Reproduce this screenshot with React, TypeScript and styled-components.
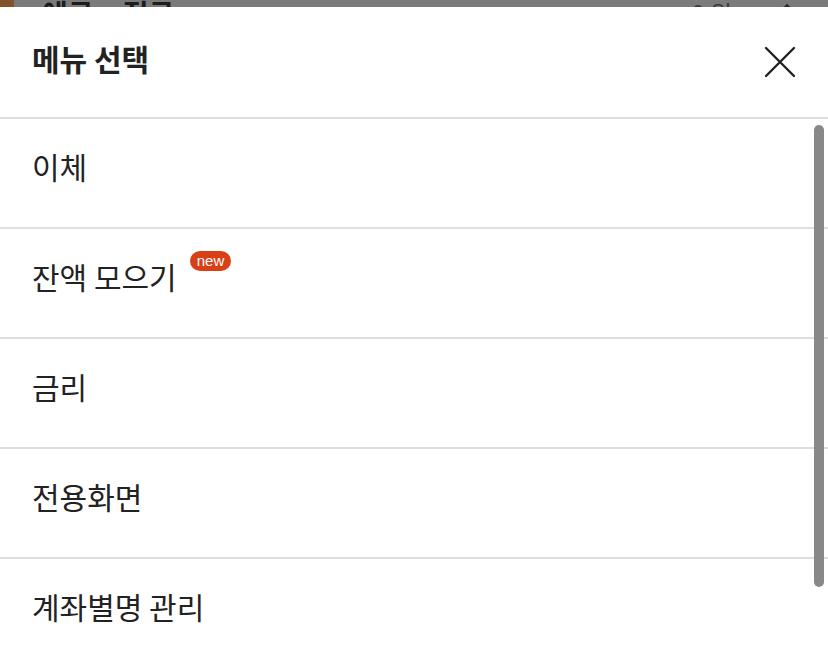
import React from "react";
import styled, { createGlobalStyle } from "styled-components";

const GlobalStyle = createGlobalStyle`
  html, body {
    margin: 0;
    padding: 0;
    background: #7b7b7b;
    font-family: "Noto Sans CJK KR", "Noto Sans", sans-serif;
    overflow: hidden;
  }
`;

const menus = [
  { label: "이체" },
  { label: "잔액 모으기", isNew: true },
  { label: "금리" },
  { label: "전용화면" },
  { label: "계좌별명 관리" },
];

export default function App() {
  return (
    <Page>
      <GlobalStyle />
      <Backdrop>
        <BackdropRow>
          <BrandMark />
          <BackTitle>예금 · 적금</BackTitle>
          <BackAmount>0 원</BackAmount>
          <BackChevron viewBox="0 0 32 20">
            <polyline points="2,18 16,4 30,18" />
          </BackChevron>
        </BackdropRow>
      </Backdrop>
      <Sheet>
        <Header>
          <Title>메뉴 선택</Title>
          <CloseButton aria-label="닫기">
            <svg width="32" height="32" viewBox="0 0 32 32">
              <path d="M2 2 L30 30 M30 2 L2 30" stroke="#222" strokeWidth="2.4" strokeLinecap="round" />
            </svg>
          </CloseButton>
        </Header>
        <List>
          {menus.map((m) => (
            <Row key={m.label}>
              <Label>{m.label}</Label>
              {m.isNew && <NewBadge>new</NewBadge>}
            </Row>
          ))}
        </List>
        <ScrollThumb />
      </Sheet>
    </Page>
  );
}

const Page = styled.div`
  width: 828px;
  height: 646px;
  display: flex;
  flex-direction: column;
  overflow: hidden;
`;

const Backdrop = styled.div`
  height: 7px;
  flex-shrink: 0;
  overflow: hidden;
  background: #7b7b7b;
`;

const BackdropRow = styled.div`
  display: flex;
  align-items: flex-end;
  height: 7px;
  padding-right: 26px;
`;

const BrandMark = styled.div`
  width: 14px;
  height: 7px;
  background: #82532a;
`;

const BackTitle = styled.div`
  margin-left: 28px;
  font-size: 28px;
  font-weight: 700;
  line-height: 28px;
  margin-bottom: -20px;
  color: #1c1c1c;
  flex: 1;
`;

const BackAmount = styled.div`
  font-size: 24px;
  line-height: 24px;
  margin-bottom: -18px;
  color: #3a3a3a;
  margin-right: 40px;
`;

const BackChevron = styled.svg`
  width: 30px;
  height: 20px;
  margin-bottom: -14px;
  fill: none;
  stroke: #2a2a2a;
  stroke-width: 2.4px;
`;

const Sheet = styled.div`
  position: relative;
  flex: 1;
  background: #fff;
  display: flex;
  flex-direction: column;
`;

const Header = styled.div`
  height: 110px;
  flex-shrink: 0;
  display: flex;
  align-items: center;
  justify-content: space-between;
  padding: 0 32px 0 32px;
  border-bottom: 2px solid #dedede;
`;

const Title = styled.h1`
  margin: -8px 0 0;
  font-size: 30px;
  font-weight: 700;
  color: #222;
`;

const CloseButton = styled.button`
  border: none;
  background: none;
  padding: 0;
  width: 32px;
  height: 32px;
  display: flex;
  align-items: center;
  justify-content: center;
`;

const List = styled.ul`
  list-style: none;
  margin: 0;
  padding: 0;
`;

const Row = styled.li`
  height: 108px;
  display: flex;
  align-items: center;
  padding-left: 32px;
  border-bottom: 2px solid #dedede;
`;

const Label = styled.span`
  font-size: 30px;
  color: #222;
  margin-top: -14px;
`;

const NewBadge = styled.span`
  align-self: flex-start;
  margin-top: 22px;
  margin-left: 13px;
  height: 20px;
  padding: 0 7px;
  border-radius: 10px;
  background: #d94016;
  color: #fff;
  font-family: "Liberation Sans", Arial, sans-serif;
  font-size: 15px;
  line-height: 19px;
`;

const ScrollThumb = styled.div`
  position: absolute;
  top: 118px;
  right: 4px;
  width: 10px;
  height: 462px;
  border-radius: 5px;
  background: #888;
`;
